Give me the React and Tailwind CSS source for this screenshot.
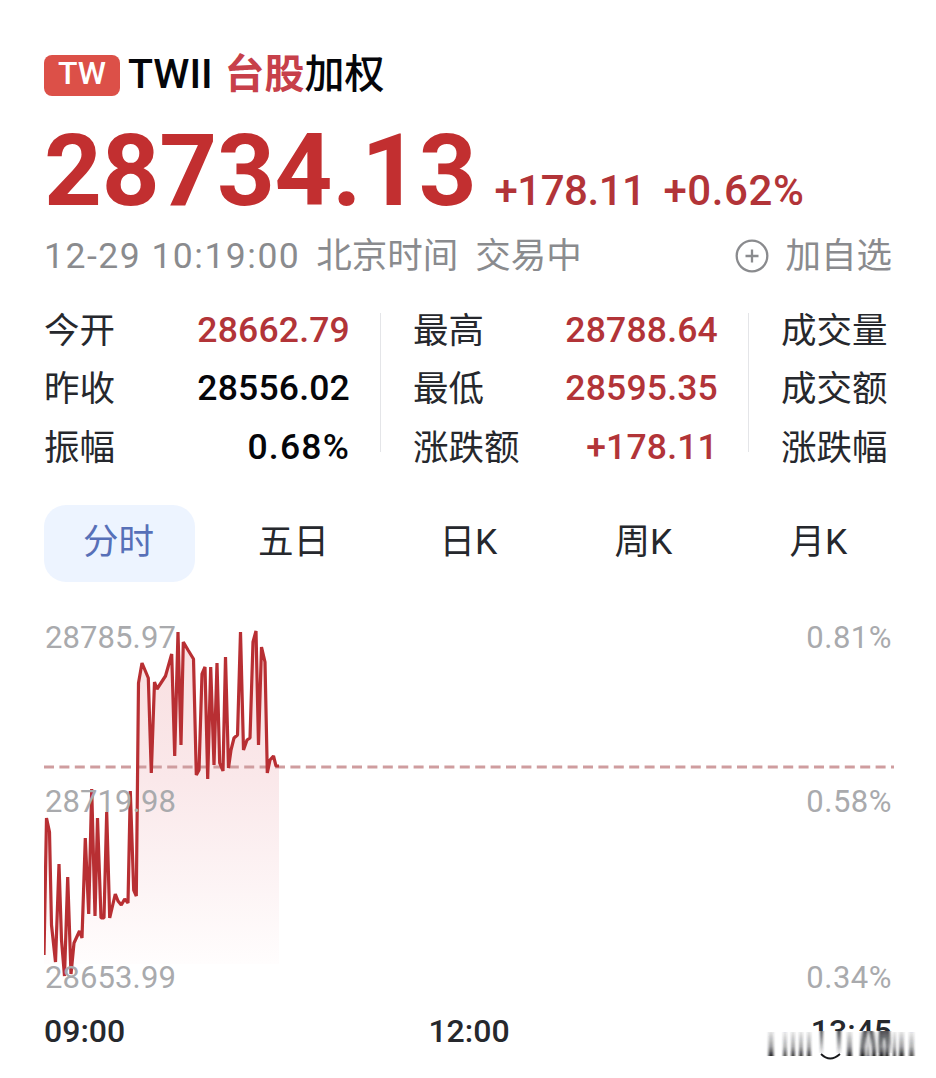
import React from 'react';

const UP = 'text-[#b23438]';
const DARK = 'text-[#05060a]';

const statColumns = [
  {
    width: 'w-[306px]',
    rows: [
      { label: '今开', value: '28662.79', color: UP },
      { label: '昨收', value: '28556.02', color: DARK },
      { label: '振幅', value: '0.68%', color: DARK, spacing: 'tracking-[1.2px]' },
    ],
  },
  {
    width: 'w-[305px]',
    rows: [
      { label: '最高', value: '28788.64', color: UP },
      { label: '最低', value: '28595.35', color: UP },
      { label: '涨跌额', value: '+178.11', color: UP },
    ],
  },
  {
    width: 'w-[108px]',
    rows: [{ label: '成交量' }, { label: '成交额' }, { label: '涨跌幅' }],
  },
];

const tabs = ['分时', '五日', '日K', '周K', '月K'];

// [x, y] pairs, y grows downwards
const points = [
  [44, 955], [46.5, 818], [49.5, 832], [51.5, 925], [55.5, 962], [59, 864], [61.5, 940], [64.5, 976],
  [67.7, 877], [71, 974], [74, 943], [79.5, 931], [82, 938], [85.3, 838], [88.7, 914], [91.7, 789],
  [95, 916], [97.5, 818], [101, 918], [104, 918], [106.7, 812], [109.7, 918], [115.3, 894],
  [118, 901], [121.3, 905], [124.7, 899], [128, 903], [130.3, 791], [133.7, 890], [136.3, 896],
  [138.5, 683], [142, 663], [148.3, 678], [151.3, 773], [154.5, 682], [157, 689], [165.5, 676],
  [171.7, 654], [174.7, 756], [178, 632], [181, 745], [183.3, 642], [188, 650], [193.5, 659],
  [196.3, 775], [199, 770], [202, 674], [205, 667], [207.7, 779], [210.7, 667], [214, 765],
  [217, 663], [219.7, 763], [223, 771], [225.5, 657], [228.5, 768], [231, 750], [234, 738],
  [237.5, 735], [240.5, 632], [243.5, 750], [247, 740], [250, 738], [253, 642], [256, 631],
  [258.5, 745], [261.5, 647], [265, 662], [267.3, 773], [270, 760], [273.5, 756], [276, 766], [279, 766],
];

const line = points.map((p) => p.join(',')).join(' ');
const area = `${line} 279,964 44,964`;

// [x, width, opacity] of each faded stroke
const streaks = [
  [768.5, 5, 0.9], [783, 4, 0.7], [791, 4, 0.8], [799, 4, 0.8], [807, 4, 0.8], [847, 5, 0.9],
  [860, 5, 0.9], [866, 4, 0.5], [872, 4, 0.9], [879, 5, 0.9], [885, 4, 0.9],
  [893, 3, 0.8], [899, 5, 0.85], [909, 5, 0.7],
];

const Header = () => (
  <div className="flex h-[46px] items-center whitespace-nowrap">
    <div className="flex h-[41px] w-[76px] items-center justify-center rounded-lg bg-[#dc5048] pb-[5px] text-[32px] font-medium text-white">
      TW
    </div>
    <div className="ml-[8px] -mt-[3px] text-[41px] font-medium leading-[46px] text-[#05060a]">TWII</div>
    <div className="ml-[12px] text-[40px] font-medium leading-[46px]">
      <span className="font-bold text-[#c7404a]">台股</span>
      <span className="text-[#05060a]">加权</span>
    </div>
  </div>
);

const Price = () => (
  <div className="mt-[17px] flex h-[112px] items-baseline whitespace-nowrap">
    <div className="text-[101px] font-bold leading-[112px] tracking-[-0.3px] text-[#c22f30]">28734.13</div>
    <div className="ml-[18px] text-[42px] font-medium tracking-[-0.5px] text-[#b23438]">+178.11</div>
    <div className="ml-[18px] text-[42px] font-medium tracking-[0.6px] text-[#b23438]">+0.62%</div>
  </div>
);

const Meta = () => (
  <div className="mt-[7px] flex h-[44px] items-center whitespace-nowrap text-[35.5px] leading-[44px] text-[#8a8b8e]">
    <span className="tracking-[1.5px]">12-29 10:19:00</span>
    <span className="ml-4">北京时间</span>
    <span className="ml-[17px]">交易中</span>
    <button className="ml-auto flex items-center gap-4" aria-label="加自选">
      <svg className="size-[34px]" viewBox="0 0 34 34" fill="none" stroke="currentColor" strokeWidth="2.3">
        <circle cx="17" cy="17" r="15.3" />
        <path d="M10.5 17h13M17 10.5v13" />
      </svg>
      <span>加自选</span>
    </button>
  </div>
);

const Stats = () => (
  <div className="mt-[23px] flex h-[177px]">
    {statColumns.map((column, i) => (
      <React.Fragment key={i}>
        {i > 0 && <div className="ml-[30px] mr-[32px] mt-[12px] h-[139px] w-px shrink-0 bg-[#e4e5e8]" />}
        <div className={`shrink-0 ${column.width}`}>
          {column.rows.map((row) => (
            <div key={row.label} className="flex h-[58.7px] items-center justify-between whitespace-nowrap text-[35.5px]">
              <span className="pt-[2px] text-[#26282d]">{row.label}</span>
              {row.value && (
                <span className={`font-medium ${row.spacing || 'tracking-[0.2px]'} ${row.color}`}>{row.value}</span>
              )}
            </div>
          ))}
        </div>
      </React.Fragment>
    ))}
  </div>
);

const Tabs = () => (
  <div className="mt-[27px] flex gap-6">
    {tabs.map((tab, i) => (
      <button
        key={tab}
        className={`flex h-[77px] w-[151px] shrink-0 items-center justify-center rounded-[22px] pb-px pr-[2px] text-[35.5px] ${
          i === 0 ? 'bg-[#edf4ff] text-[#5770b8]' : 'text-[#26282d]'
        }`}
      >
        {tab}
      </button>
    ))}
  </div>
);

const Chart = () => (
  <div className="relative mt-[34px] h-[380px] w-[850px]">
    <svg className="block h-full w-full" viewBox="44 616 850 380" fill="none">
      <defs>
        <linearGradient id="fill" x1="0" y1="631" x2="0" y2="964" gradientUnits="userSpaceOnUse">
          <stop offset="0" stopColor="#f9dfe0" />
          <stop offset="0.45" stopColor="#fae8ea" />
          <stop offset="1" stopColor="#fffdfd" />
        </linearGradient>
      </defs>
      <polygon points={area} fill="url(#fill)" />
      <path d="M44 767H894" stroke="#cf9d9f" strokeWidth="3" strokeDasharray="10 5.4" />
      <polyline points={line} stroke="#b82f33" strokeWidth="3.2" strokeLinejoin="bevel" />
    </svg>
    <div className="absolute inset-0 pl-px pr-[2px] text-[31px] leading-[36px] text-[#a9aaad]">
      <div className="flex justify-between pt-[4px]">
        <span className="tracking-[0.1px]">28785.97</span>
        <span className="tracking-[0.5px]">0.81%</span>
      </div>
      <div className="mt-[128px] flex justify-between">
        <span className="tracking-[0.1px]">28719.98</span>
        <span className="tracking-[0.5px]">0.58%</span>
      </div>
      <div className="mt-[140px] flex justify-between">
        <span className="tracking-[0.1px]">28653.99</span>
        <span className="tracking-[0.5px]">0.34%</span>
      </div>
    </div>
  </div>
);

const TimeAxis = () => (
  <div className="relative mt-[15px] grid h-[40px] w-[850px] grid-cols-3 items-center text-[32px] font-medium leading-[40px] text-[#26282d]">
    <span>09:00</span>
    <span className="text-center">12:00</span>
    <span className="pr-[2px] text-right">13:45</span>
    <svg className="absolute left-[716px] top-[20px] h-[32px] w-[160px]" viewBox="760 1030 160 32" fill="none">
      <defs>
        <linearGradient id="streak" x1="0" y1="0" x2="0" y2="1">
          <stop offset="0" stopColor="#26282d" stopOpacity="0.15" />
          <stop offset="0.6" stopColor="#26282d" stopOpacity="0.5" />
          <stop offset="1" stopColor="#0b0c0e" />
        </linearGradient>
        <linearGradient id="fade" x1="0" y1="0" x2="0" y2="1">
          <stop offset="0" stopColor="#26282d" stopOpacity="0.8" />
          <stop offset="1" stopColor="#26282d" stopOpacity="0.1" />
        </linearGradient>
        <filter id="soft">
          <feGaussianBlur stdDeviation="0.9 0.4" />
        </filter>
      </defs>
      <rect x="760" y="1030" width="160" height="32" fill="#fff" />
      <g filter="url(#soft)">
        {streaks.map(([x, width, opacity]) => (
          <rect key={x} x={x} y="1031" width={width} height="24" fill="url(#streak)" opacity={opacity} />
        ))}
        <rect x="820" y="1030" width="3" height="22" fill="url(#fade)" />
        <rect x="837" y="1030" width="4" height="22" fill="url(#fade)" />
        <path d="M863 1030h5l-4 22h-4zM869 1030h4l3 22h-4zM879 1030h11l2 22h-4l-4-16-4 16h-3z" fill="url(#fade)" />
      </g>
      <path d="M821 1053Q830 1062 840 1053" stroke="#17181b" strokeWidth="1.8" />
    </svg>
  </div>
);

export default function App() {
  return (
    <div className="h-[1078px] w-[936px] overflow-hidden bg-white pl-11 pr-[44px] pt-[52px] font-[Roboto,'Noto_Sans_CJK_SC',sans-serif]">
      <Header />
      <Price />
      <Meta />
      <Stats />
      <Tabs />
      <Chart />
      <TimeAxis />
    </div>
  );
}
